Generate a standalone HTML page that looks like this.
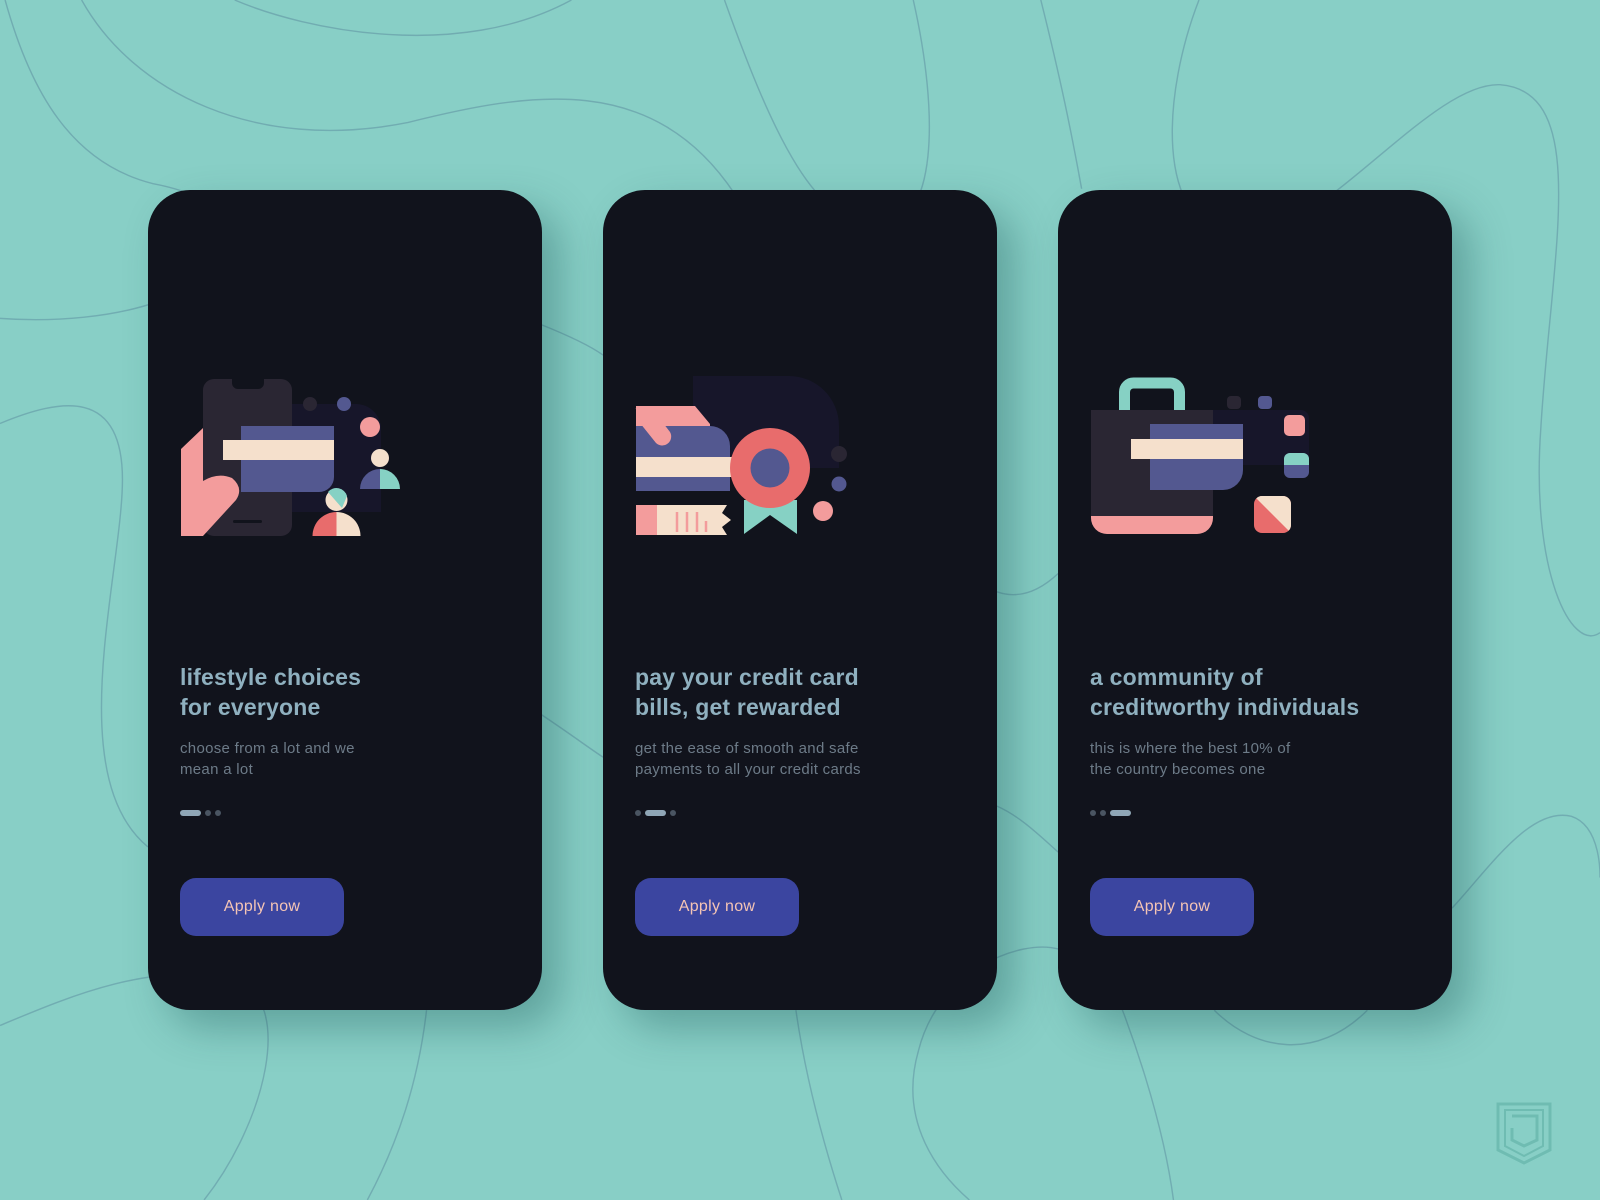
<!DOCTYPE html>
<html><head><meta charset="utf-8"><style>
*{margin:0;padding:0;box-sizing:border-box}
body{width:1600px;height:1200px;background:#88cfc6;position:relative;overflow:hidden;font-family:"Liberation Sans",sans-serif}
.bg{position:absolute;left:0;top:0}
.card{position:absolute;top:190px;width:394px;height:820px;background:#11131c;border-radius:42px;box-shadow:18px 18px 40px rgba(20,80,80,.35)}
.t{position:absolute;left:32px;top:472px;font-size:23px;font-weight:bold;color:#8fb0bf;line-height:30px;letter-spacing:.2px}
.s{position:absolute;left:32px;top:548px;font-size:15px;color:#6d7b88;line-height:21px;letter-spacing:.3px}
.dots{position:absolute;left:32px;top:620px;height:6px}
.dots i{position:absolute;top:0;height:6px;border-radius:3px;background:#4a5562}
.dots i.a{background:#8fa6b6}
.btn{position:absolute;left:32px;top:688px;width:164px;height:58px;border-radius:16px;background:#3b45a0;color:#f5c5b5;font-size:16px;text-align:center;line-height:58px;letter-spacing:.3px}
</style></head><body>
<svg class="bg" width="1600" height="1200" viewBox="0 0 1600 1200">
<g transform="scale(1.0204)" fill="none" stroke="#6da7ae" stroke-width="1.4" opacity=".85">
<path d="M5,0 C30,90 70,160 150,180 C230,195 260,240 180,285 C120,315 40,315 0,312"/>
<path d="M80,0 C130,90 250,150 400,120 C520,90 640,70 720,190"/>
<path d="M230,0 C300,30 450,60 560,0"/>
<path d="M710,0 C760,140 800,220 860,222 C920,224 920,110 895,0"/>
<path d="M1020,0 C1040,80 1050,130 1060,185"/>
<path d="M1175,0 C1140,90 1130,220 1210,232 C1290,240 1400,80 1470,83 C1560,90 1520,250 1510,420 C1500,560 1540,640 1568,620"/>
<path d="M0,415 C60,390 120,380 120,470 C120,560 60,760 145,830"/>
<path d="M530,318 C560,330 580,340 591,348"/>
<path d="M530,700 C560,720 580,735 591,742"/>
<path d="M977,580 C1000,588 1020,578 1037,562"/>
<path d="M977,790 C1000,800 1020,820 1037,835"/>
<path d="M0,1005 C60,980 150,940 230,960 C290,980 260,1100 200,1176"/>
<path d="M418,990 C410,1060 390,1120 360,1176"/>
<path d="M780,990 C790,1060 810,1130 825,1176"/>
<path d="M1037,930 C1000,920 920,950 900,1030 C880,1100 920,1150 950,1176"/>
<path d="M1080,940 C1110,1010 1140,1100 1150,1176"/>
<path d="M1190,990 C1230,1030 1290,1040 1340,990"/>
<path d="M1423,890 C1460,850 1500,790 1540,800 C1570,810 1568,860 1568,860"/>
</g>
<g fill="none" stroke="#6fbcb2" stroke-width="3">
<path d="M1498,1104 H1550 V1150 L1524,1163 L1498,1150 Z"/>
<path d="M1505,1110 H1543 V1146 L1524,1156 L1505,1146 Z" stroke-width="2"/>
<path d="M1512,1116 H1537 V1140 L1524,1146 L1512,1140 V1128"/>
</g>
</svg>

<div class="card" style="left:148px"><div class="t">lifestyle choices<br>for everyone</div><div class="s">choose from a lot and we<br>mean a lot</div><div class="dots"><i class="a" style="left:0;width:21px"></i><i style="left:25px;width:6px"></i><i style="left:35px;width:6px"></i></div><div class="btn">Apply now</div></div>
<div class="card" style="left:603px"><div class="t">pay your credit card<br>bills, get rewarded</div><div class="s">get the ease of smooth and safe<br>payments to all your credit cards</div><div class="dots"><i style="left:0;width:6px"></i><i class="a" style="left:10px;width:21px"></i><i style="left:35px;width:6px"></i></div><div class="btn">Apply now</div></div>
<div class="card" style="left:1058px"><div class="t">a community of<br>creditworthy individuals</div><div class="s">this is where the best 10% of<br>the country becomes one</div><div class="dots"><i style="left:0;width:6px"></i><i style="left:10px;width:6px"></i><i class="a" style="left:20px;width:21px"></i></div><div class="btn">Apply now</div></div>

<svg class="bg" width="1600" height="1200" viewBox="0 0 1600 1200">
<path d="M291,404 H356 A25,25 0 0 1 381,429 V512 H291 Z" fill="#17162a"/>
<rect x="203" y="379" width="89" height="157" rx="11" fill="#2a2633"/>
<path d="M232,379 H264 V383 A6,6 0 0 1 258,389 H238 A6,6 0 0 1 232,383 Z" fill="#11131c"/>
<rect x="233" y="520" width="29" height="3" rx="1.5" fill="#11131c"/>
<path d="M241,426 H334 V477 A15,15 0 0 1 319,492 H241 Z" fill="#535890"/>
<rect x="223" y="440" width="111" height="20" fill="#f5e0cc"/>
<path d="M181,449 L203,428 L203,481 Q218,472 232,478 Q244,488 236,500 L203,536 H181 Z" fill="#f39c9c"/>
<circle cx="310" cy="404" r="7" fill="#2a2633"/>
<circle cx="344" cy="404" r="7" fill="#535890"/>
<circle cx="370" cy="427" r="10" fill="#f39c9c"/>
<circle cx="380" cy="458" r="9" fill="#f5e0cc"/>
<path d="M360,489 A20,20 0 0 1 380,469 V489 Z" fill="#535890"/>
<path d="M380,469 A20,20 0 0 1 400,489 H380 Z" fill="#86d1c4"/>
<circle cx="336.5" cy="500" r="11" fill="#f5e0cc"/>
<path d="M328,492 A11,11 0 0 1 347,496 L342,508 Z" fill="#86d1c4"/>
<path d="M312.5,536 A24,24 0 0 1 336.5,512 V536 Z" fill="#e86c6c"/>
<path d="M336.5,512 A24,24 0 0 1 360.5,536 H336.5 Z" fill="#f5e0cc"/>
<path d="M693,376 H789 A50,50 0 0 1 839,426 V468 H693 Z" fill="#17162a"/>
<path d="M636,406 H695 L710,424 V430 H636 Z" fill="#f39c9c"/>
<path d="M636,426 H710 A20,20 0 0 1 730,446 V491 H636 Z" fill="#535890"/>
<path d="M636,408 L652,426 L656,434" stroke="#f39c9c" stroke-width="1" fill="none"/>
<path d="M636,406 H650 L670,432 A9,9 0 0 1 656,443 L636,418 Z" fill="#f39c9c"/>
<rect x="636" y="457" width="120" height="20" fill="#f5e0cc"/>
<path d="M744,500 H797 V534 L770,515 L744,534 Z" fill="#86d1c4"/>
<circle cx="770" cy="468" r="40" fill="#e86c6c"/>
<circle cx="770" cy="468" r="19.5" fill="#535890"/>
<rect x="636" y="505" width="22" height="30" fill="#f39c9c"/>
<path d="M657,505 H727 L722,513 L731,520 L722,527 L727,535 H657 Z" fill="#f5e0cc"/>
<g stroke="#f39c9c" stroke-width="2.5"><line x1="677" y1="512" x2="677" y2="532"/><line x1="687" y1="512" x2="687" y2="532"/><line x1="697" y1="512" x2="697" y2="532"/><line x1="706" y1="521" x2="706" y2="532"/></g>
<circle cx="839" cy="454" r="8" fill="#2a2633"/>
<circle cx="839" cy="484" r="7.5" fill="#535890"/>
<circle cx="823" cy="511" r="10" fill="#f39c9c"/>
<path d="M1124.5,412 V392 A9,9 0 0 1 1133.5,383 H1170.5 A9,9 0 0 1 1179.5,392 V412" fill="none" stroke="#86d1c4" stroke-width="11"/>
<path d="M1213,410 H1301 A8,8 0 0 1 1309,418 V465 H1213 Z" fill="#17162a"/>
<path d="M1091,410 H1213 V518 A16,16 0 0 1 1197,534 H1107 A16,16 0 0 1 1091,518 Z" fill="#2a2633"/>
<path d="M1091,516 H1213 V518 A16,16 0 0 1 1197,534 H1107 A16,16 0 0 1 1091,518 Z" fill="#f39c9c"/>
<path d="M1150,424 H1243 V470 A20,20 0 0 1 1223,490 H1150 Z" fill="#535890"/>
<rect x="1131" y="439" width="112" height="20" fill="#f5e0cc"/>
<rect x="1227" y="396" width="14" height="13" rx="4" fill="#2a2633"/>
<rect x="1258" y="396" width="14" height="13" rx="4" fill="#535890"/>
<rect x="1284" y="415" width="21" height="21" rx="5" fill="#f39c9c"/>
<rect x="1284" y="453" width="25" height="25" rx="6" fill="#535890"/>
<path d="M1284,465 V459 A6,6 0 0 1 1290,453 H1303 A6,6 0 0 1 1309,459 V465 Z" fill="#86d1c4"/>
<clipPath id="sq"><rect x="1254" y="496" width="37" height="37" rx="8"/></clipPath>
<g clip-path="url(#sq)"><rect x="1254" y="496" width="37" height="37" fill="#e86c6c"/><path d="M1254,496 H1291 V533 Z" fill="#f5e0cc"/></g>
</svg>
</body></html>
